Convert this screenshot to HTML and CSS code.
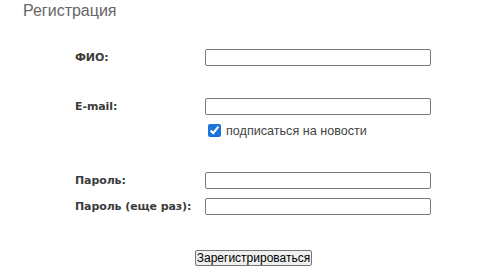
FILE: index.html
```html
<!DOCTYPE html>
<html lang="ru">
<head>
<meta charset="utf-8">
<title>Регистрация</title>
<link rel="stylesheet" href="styles.css">
</head>
<body>
<h1 class="title">Регистрация</h1>
<form class="form">
  <div class="row row-fio">
    <label class="label" for="fio">ФИО:</label>
    <input class="field" id="fio" type="text">
  </div>
  <div class="row row-email">
    <label class="label" for="email">E-mail:</label>
    <input class="field" id="email" type="text">
  </div>
  <div class="row row-sub">
    <span></span>
    <label class="sub"><input class="check" type="checkbox" checked><span class="sub-text">подписаться на новости</span></label>
  </div>
  <div class="row row-pass">
    <label class="label" for="pass">Пароль:</label>
    <input class="field" id="pass" type="password">
  </div>
  <div class="row row-pass2">
    <label class="label" for="pass2">Пароль (еще раз):</label>
    <input class="field" id="pass2" type="password">
  </div>
  <div class="actions">
    <button class="submit" type="button">Зарегистрироваться</button>
  </div>
</form>
</body>
</html>
```
FILE: styles.css
```css
html, body {
  margin: 0;
  padding: 0;
  background: #ffffff;
}
body {
  width: 500px;
  height: 272px;
  overflow: hidden;
  font-family: "Liberation Sans", Arial, sans-serif;
}
.title {
  margin: 0;
  padding: 2px 0 0 23px;
  font-size: 16px;
  line-height: 18px;
  font-weight: normal;
  color: #666666;
}
.form {
  display: flex;
  flex-direction: column;
  padding-left: 75px;
}
.row {
  display: grid;
  grid-template-columns: 130px 226px;
  align-items: center;
}
.row-fio { margin-top: 29px; }
.row-email { margin-top: 32px; }
.row-sub { margin-top: 9px; }
.row-pass { margin-top: 35px; }
.row-pass2 { margin-top: 9px; }
.label {
  font-family: "DejaVu Sans", Verdana, sans-serif;
  font-weight: bold;
  font-size: 11px;
  letter-spacing: -0.1px;
  color: #3c3c3c;
  white-space: nowrap;
}
.field {
  box-sizing: border-box;
  width: 226px;
  height: 17px;
  margin: 0;
  padding: 0 2px;
  border: 1px solid #7a7a7a;
  border-radius: 2px;
  background: #ffffff;
}
.sub {
  display: flex;
  align-items: center;
  height: 13px;
}
.check {
  width: 13px;
  height: 13px;
  margin: 0 0 0 3px;
  accent-color: #1a73d9;
}
.sub-text {
  margin-left: 5px;
  font-size: 12.6px;
  color: #444444;
}
.actions {
  display: flex;
  justify-content: center;
  margin-top: 35px;
  padding-right: 68px;
}
.submit {
  box-sizing: border-box;
  height: 16px;
  margin: 0;
  padding: 0 1px;
  font-family: "Liberation Sans", Arial, sans-serif;
  font-size: 12px;
  line-height: 14px;
  color: #000000;
  background: #efefef;
  border: 1px solid #767676;
  border-radius: 2px;
}
```
